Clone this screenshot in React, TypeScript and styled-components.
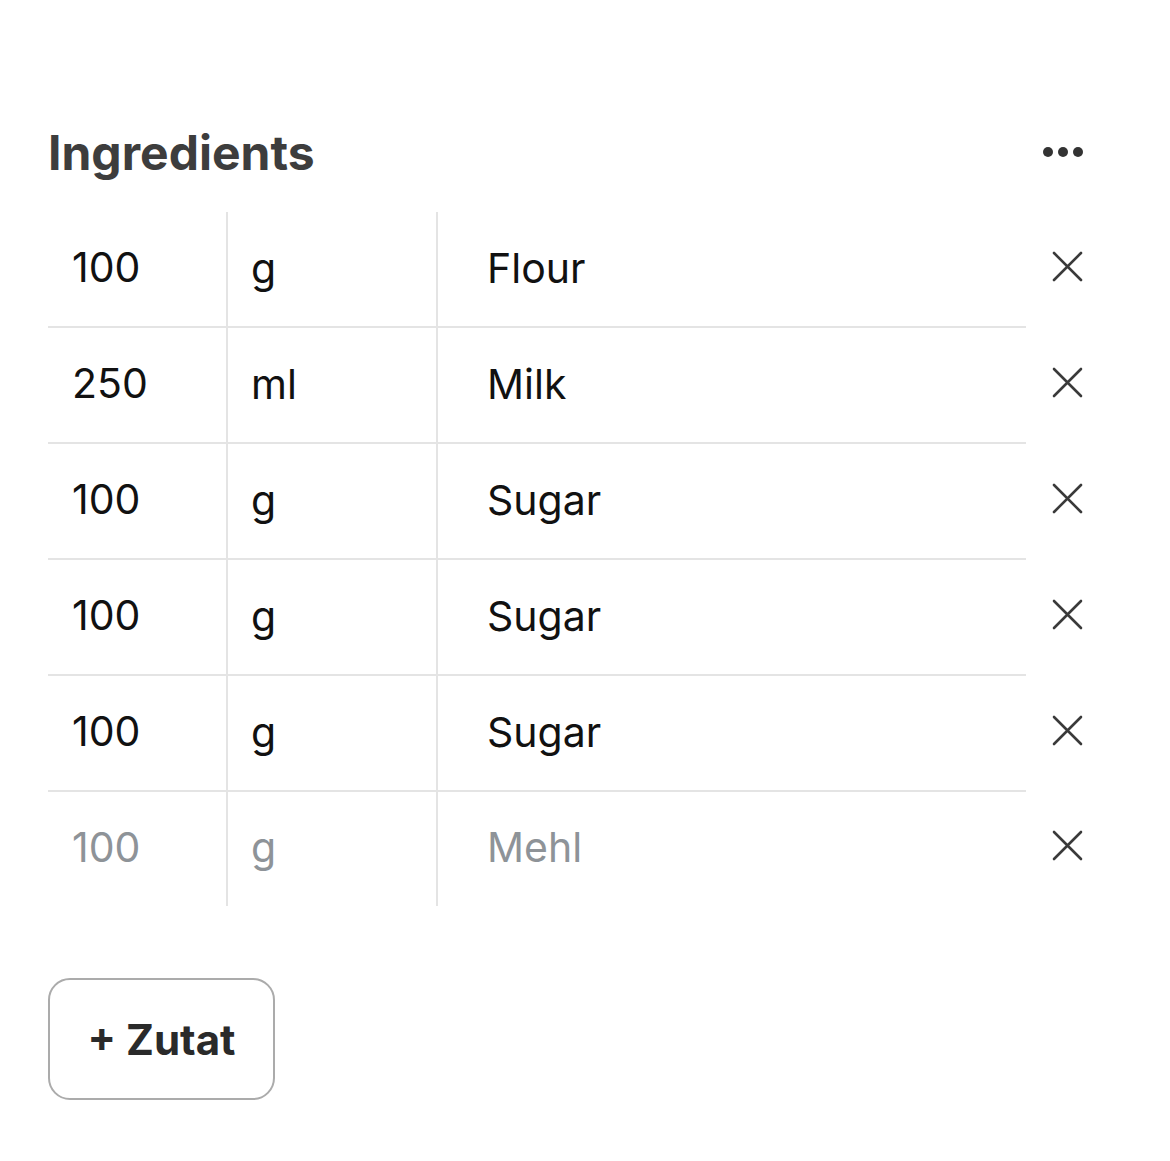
import { createGlobalStyle } from 'styled-components';
import styled from 'styled-components';

const GlobalStyle = createGlobalStyle`
  html, body {
    margin: 0;
    padding: 0;
    background: #ffffff;
  }
  body {
    font-family: Inter, "Liberation Sans", sans-serif;
    color: #111111;
  }
`;

const Page = styled.main`
  width: 1036px;
  padding: 111px 0 0 48px;
`;

const Header = styled.header`
  display: flex;
  align-items: center;
  justify-content: space-between;
  height: 82px;
  margin-bottom: 19px;
`;

const Title = styled.h2`
  margin: 0;
  font-size: 48px;
  font-weight: 650;
  color: #3d3d3d;
`;

const MenuButton = styled.button`
  display: flex;
  align-items: center;
  padding: 0;
  border: none;
  background: none;
  cursor: pointer;
`;

const Table = styled.div`
  display: flex;
  flex-direction: column;
`;

const Row = styled.div`
  display: flex;
  align-items: stretch;
`;

const Cells = styled.div<{ $last?: boolean }>`
  display: flex;
  width: 978px;
  height: 114px;
  border-bottom: ${(p) => (p.$last ? 'none' : '2px solid #e4e4e4')};
`;

const Cell = styled.div<{ $width?: string; $pad: number; $divider?: boolean; $last?: boolean }>`
  display: flex;
  align-items: center;
  box-sizing: border-box;
  width: ${(p) => p.$width ?? 'auto'};
  flex: ${(p) => (p.$width ? 'none' : '1')};
  padding-left: ${(p) => p.$pad}px;
  padding-bottom: 4px;
  border-left: ${(p) => (p.$divider ? '2px solid #e4e4e4' : 'none')};
  margin-bottom: ${(p) => (p.$divider && !p.$last ? '-2px' : '0')};
`;

const Field = styled.input`
  width: 100%;
  border: none;
  outline: none;
  padding: 0;
  background: transparent;
  font-family: inherit;
  font-size: 41px;
  font-weight: 400;
  color: #111111;

  &::placeholder {
    color: #8e9398;
  }
`;

const RemoveButton = styled.button`
  display: flex;
  align-items: center;
  justify-content: flex-end;
  width: 58px;
  padding: 0 1px 8px 0;
  border: none;
  background: none;
  cursor: pointer;
`;

const AddButton = styled.button`
  margin-top: 72px;
  width: 227px;
  height: 122px;
  border: 2px solid #ababab;
  border-radius: 22px;
  background: #ffffff;
  font-family: inherit;
  font-size: 42px;
  font-weight: 700;
  color: #2a2a2a;
  cursor: pointer;
`;

const DotsIcon = () => (
  <svg width="42" height="12" viewBox="0 0 42 12">
    <circle cx="6" cy="6" r="5" fill="#333333" />
    <circle cx="21" cy="6" r="5" fill="#333333" />
    <circle cx="36" cy="6" r="5" fill="#333333" />
  </svg>
);

const CloseIcon = () => (
  <svg width="31" height="31" viewBox="0 0 31 31">
    <path d="M2 2 L29 29 M29 2 L2 29" stroke="#3a3a3a" strokeWidth="2.6" strokeLinecap="round" />
  </svg>
);

const ingredients = [
  { amount: '100', unit: 'g', name: 'Flour' },
  { amount: '250', unit: 'ml', name: 'Milk' },
  { amount: '100', unit: 'g', name: 'Sugar' },
  { amount: '100', unit: 'g', name: 'Sugar' },
  { amount: '100', unit: 'g', name: 'Sugar' },
];

export default function App() {
  const rows = [...ingredients, null];

  return (
    <>
      <GlobalStyle />
      <Page>
        <Header>
          <Title>Ingredients</Title>
          <MenuButton aria-label="More">
            <DotsIcon />
          </MenuButton>
        </Header>

        <Table>
          {rows.map((item, i) => {
            const last = item === null;
            return (
              <Row key={i}>
                <Cells $last={last}>
                  <Cell $width="178px" $pad={24}>
                    {last ? <Field placeholder="100" /> : <Field defaultValue={item.amount} />}
                  </Cell>
                  <Cell $width="210px" $pad={23} $divider $last={last}>
                    {last ? <Field placeholder="g" /> : <Field defaultValue={item.unit} />}
                  </Cell>
                  <Cell $pad={49} $divider $last={last}>
                    {last ? <Field placeholder="Mehl" /> : <Field defaultValue={item.name} />}
                  </Cell>
                </Cells>
                <RemoveButton aria-label="Remove">
                  <CloseIcon />
                </RemoveButton>
              </Row>
            );
          })}
        </Table>

        <AddButton>+ Zutat</AddButton>
      </Page>
    </>
  );
}
